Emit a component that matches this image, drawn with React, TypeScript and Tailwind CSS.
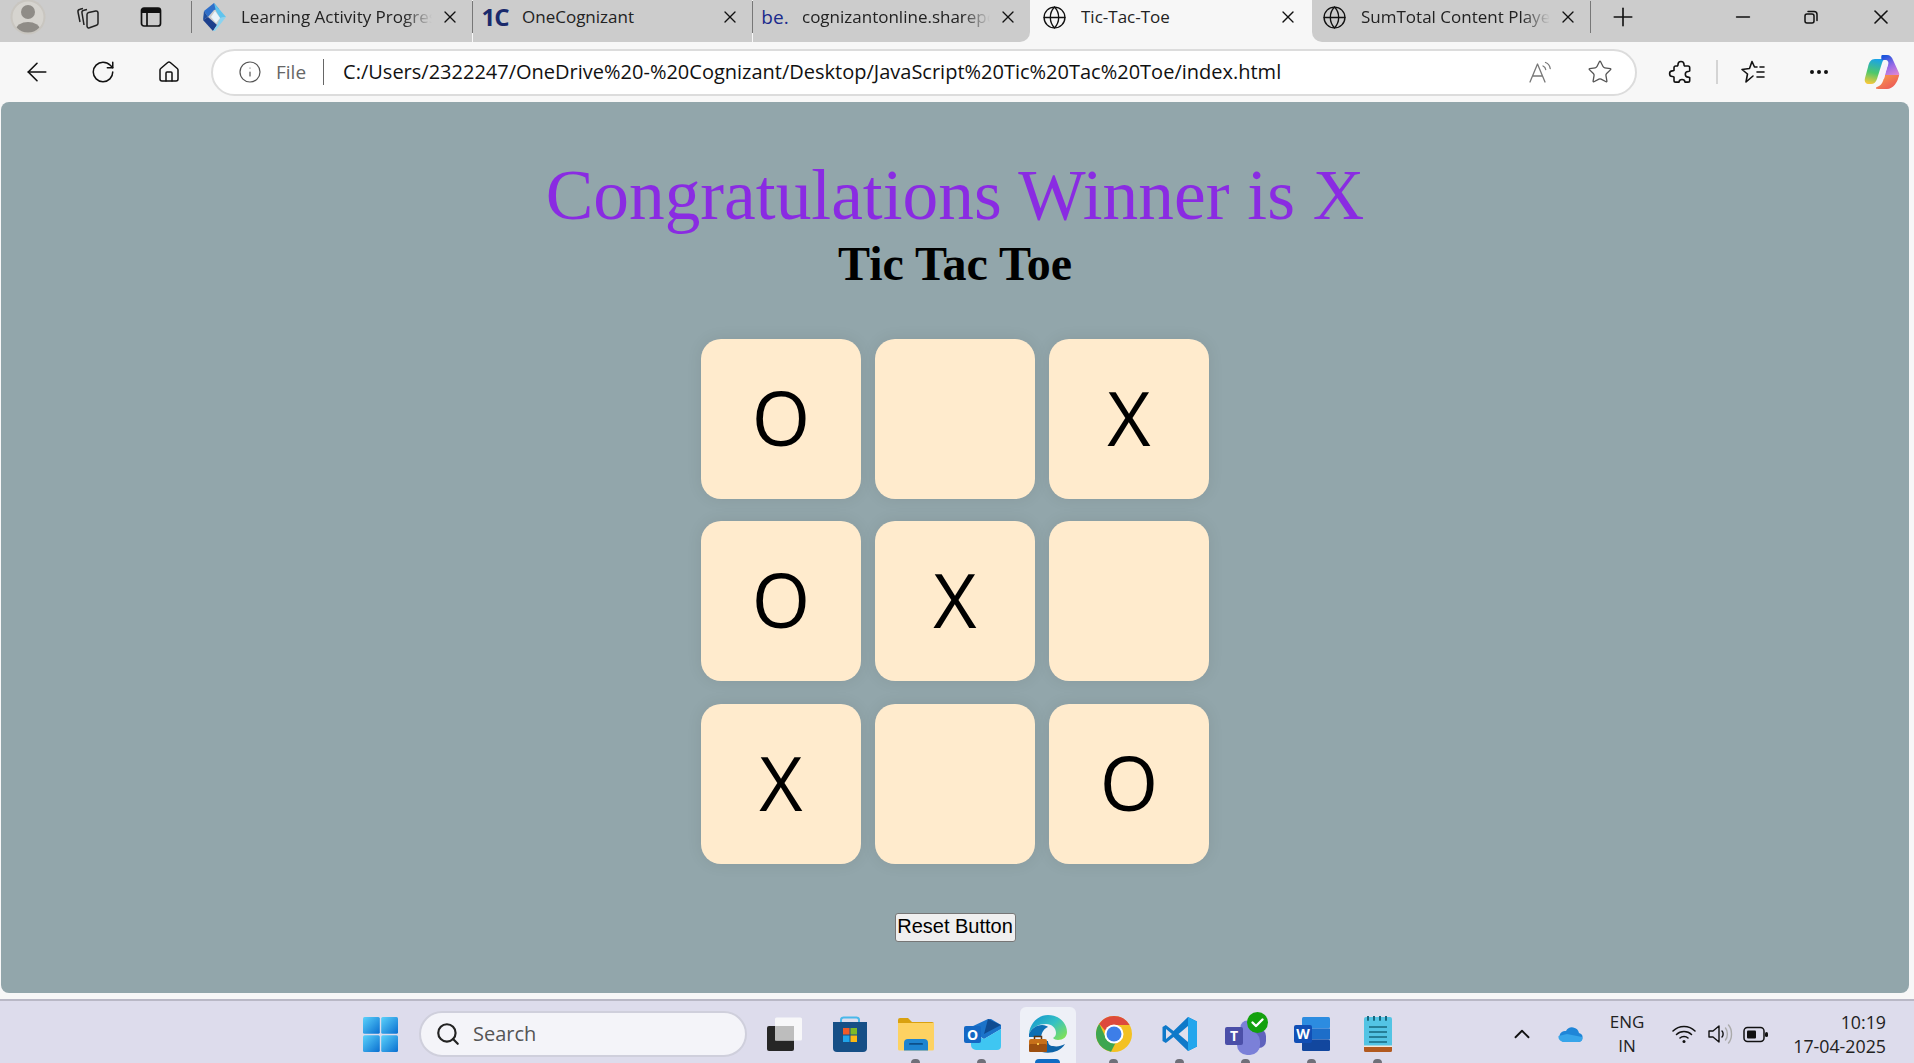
import type { ReactNode } from "react";
import {
  ArrowLeft,
  ChevronUp,
  Ellipsis,
  Globe,
  House,
  Info,
  Minus,
  Plus,
  RotateCw,
  Search,
  Star,
  X,
} from "lucide-react";

const board = ["O", "", "X", "O", "X", "", "X", "", "O"];

function ProfileIcon() {
  return (
    <svg width="36" height="36" viewBox="0 0 36 36">
      <circle cx="18" cy="18" r="17.5" fill="#c9c6c0" />
      <clipPath id="pf">
        <circle cx="18" cy="18" r="15.5" />
      </clipPath>
      <g clipPath="url(#pf)">
        <circle cx="18" cy="18" r="16" fill="#d6d4cf" />
        <circle cx="18" cy="13" r="7" fill="#8f8c87" />
        <ellipse cx="18" cy="31" rx="12" ry="8" fill="#8f8c87" />
      </g>
    </svg>
  );
}

function CollectionsIcon() {
  return (
    <svg width="26" height="26" viewBox="0 0 26 26" fill="none" stroke="#222" strokeWidth="1.5" strokeLinejoin="round">
      <path d="M5 18 3 8c-.3-1.500.5-2.500 2-2.800L8 4.500" />
      <path d="M9 21 7 9c-.3-1.500.5-2.500 2-2.800l3-.7" />
      <path d="M12 10.500c0-1 .7-1.800 1.700-2l7-1.500c1.300-.3 2.300.6 2.300 1.800v10.500c0 1-.6 1.700-1.500 2l-7 2.500c-1.300.4-2.500-.5-2.500-1.800z" />
    </svg>
  );
}

function VerticalTabsIcon() {
  return (
    <svg width="24" height="24" viewBox="0 0 24 24" fill="none">
      <rect x="2.500" y="3" width="19" height="18" rx="2.500" stroke="#111" strokeWidth="1.700" />
      <path d="M2.500 5.500A2.500 2.500 0 0 1 5 3h14a2.500 2.500 0 0 1 2.500 2.500V8h-19z" fill="#111" />
      <path d="M8 8v13" stroke="#111" strokeWidth="1.700" />
    </svg>
  );
}

function LearningIcon() {
  return (
    <svg width="25" height="30" viewBox="0 0 25 30">
      <path d="M12 1 2 9l4 6 6-7 5-1z" fill="#2f6fc9" />
      <path d="M2 9 1 18l5-3z" fill="#1f4f9f" />
      <path d="M1 18l10 11 4-6-9-8z" fill="#1c3f8c" />
      <path d="M12 1l12 14-6 1-4-7z" fill="#5ec4ee" />
      <path d="M24 15 13 29l-2 0 4-6 3-7z" fill="#8ad3f0" />
      <path d="M13 9l5 7-4 5-5-6z" fill="#e8f3fa" />
    </svg>
  );
}

function ReadAloudIcon() {
  return (
    <svg width="26" height="26" viewBox="0 0 26 26" fill="none" stroke="#777" strokeWidth="1.300" strokeLinecap="round" strokeLinejoin="round">
      <path d="M2 23 9.500 5 17 23M5 17h9" />
      <path d="M15 7c1.500.6 2.500 2 2.700 3.500M17.500 3.500c2.600 1 4.300 3.300 4.700 6" />
    </svg>
  );
}

function PuzzleIcon() {
  return (
    <svg width="26" height="26" viewBox="0 0 26 26" fill="none" stroke="#111" strokeWidth="1.600" strokeLinejoin="round">
      <path d="M10 5.500a3 3 0 0 1 6 0c0 .8 0 1 .5 1.500h3.500c1 0 1.700.7 1.700 1.700V12c-.5.4-1 .5-1.600.5a2.800 2.800 0 0 0 0 5.600c.6 0 1.100.1 1.600.5v2.800c0 1-.7 1.700-1.700 1.700H17c-.2-1.700-1.600-2.600-3-2.600s-2.800.9-3 2.600H7.700C6.700 23.100 6 22.400 6 21.400V18c-.5-.4-1-.5-1.600-.5a2.800 2.800 0 0 1 0-5.600c.6 0 1.100-.1 1.600-.5V8.700C6 7.700 6.700 7 7.700 7h1.800c.5-.5.500-.7.500-1.500z" />
    </svg>
  );
}

function FavoritesIcon() {
  return (
    <svg width="26" height="26" viewBox="0 0 26 26" fill="none" stroke="#111" strokeWidth="1.600" strokeLinejoin="round" strokeLinecap="round">
      <path d="M12 2.500 14.500 8H17M20 8h4M17 13h7M17 18h7M13 17l-7 6 1.500-8L2 10.500 9.500 9.500 12 2.500" />
    </svg>
  );
}

function CopilotIcon() {
  return (
    <svg width="36" height="36" viewBox="0 0 36 36">
      <defs>
        <linearGradient id="cpa" x1="0.500" y1="0" x2="0.300" y2="1">
          <stop offset="0" stopColor="#1aa3e8" />
          <stop offset="0.550" stopColor="#4ec86a" />
          <stop offset="1" stopColor="#f6c83a" />
        </linearGradient>
        <linearGradient id="cpb" x1="0.300" y1="0" x2="0.700" y2="1">
          <stop offset="0" stopColor="#1a55dc" />
          <stop offset="0.500" stopColor="#9a6be6" />
          <stop offset="1" stopColor="#e88ad0" />
        </linearGradient>
        <linearGradient id="cpc" x1="0" y1="0" x2="1" y2="1">
          <stop offset="0" stopColor="#f9a04a" />
          <stop offset="1" stopColor="#ea4d5a" />
        </linearGradient>
      </defs>
      <path d="M11 5h11c-2 0-3 1-4 4l-5 16c-1 3-3 5-6 5H5c-3 0-5-2-4-6l3-11c1-5 3-8 7-8z" fill="url(#cpa)" />
      <path d="M18 1h5c3 0 5 2 6 5l6 13c1 3-1 5-4 5h-7c-3 0-4-1-3-4l3-9c1-3 0-5-3-5h-3c-1 0-1-5 0-5z" fill="url(#cpb)" />
      <path d="M21 21h14c-1 7-6 14-12 14h-8c-3 0-4-1-2-2 3-1 5-3 6-6z" fill="url(#cpc)" />
      <path d="M20 10h4l-4 15h-6z" fill="#f6f0fb" />
    </svg>
  );
}

function RestoreIcon() {
  return (
    <svg width="18" height="18" viewBox="0 0 18 18" fill="none" stroke="#111" strokeWidth="1.500">
      <rect x="3" y="6" width="9" height="9" rx="2" />
      <path d="M6 3.500h6c2 0 3 1 3 3v6" strokeLinecap="round" />
    </svg>
  );
}

function WindowsLogo() {
  return (
    <svg width="35" height="35" viewBox="0 0 35 35">
      <defs>
        <linearGradient id="win" x1="0" y1="0" x2="1" y2="1">
          <stop offset="0" stopColor="#5bd2fb" />
          <stop offset="1" stopColor="#0a6fd0" />
        </linearGradient>
      </defs>
      <rect width="16.800" height="16.800" rx="1.500" fill="url(#win)" />
      <rect x="18.200" width="16.800" height="16.800" rx="1.500" fill="url(#win)" />
      <rect y="18.200" width="16.800" height="16.800" rx="1.500" fill="url(#win)" />
      <rect x="18.200" y="18.200" width="16.800" height="16.800" rx="1.500" fill="url(#win)" />
    </svg>
  );
}

function TaskViewIcon() {
  return (
    <svg width="37" height="35" viewBox="0 0 37 35">
      <rect x="1" y="9" width="27" height="25" rx="2" fill="#262626" />
      <rect x="9" y="0.500" width="27" height="23" rx="1.500" fill="#f7f7f9" />
      <rect x="9" y="9" width="19" height="14.500" fill="#bdbdbd" />
    </svg>
  );
}

function StoreIcon() {
  return (
    <svg width="36" height="37" viewBox="0 0 36 37">
      <path d="M9 7V4c0-1.500 1-2.500 2.500-2.500h13C26 1.500 27 2.500 27 4v3" fill="none" stroke="#49b8ea" strokeWidth="2" />
      <path d="M1 6h34v26a4 4 0 0 1-4 4H5a4 4 0 0 1-4-4z" fill="#164f86" />
      <rect x="11" y="12" width="6.500" height="6.500" fill="#ef5a29" />
      <rect x="18.500" y="12" width="6.500" height="6.500" fill="#7db928" />
      <rect x="11" y="19.500" width="6.500" height="6.500" fill="#1fa4ea" />
      <rect x="18.500" y="19.500" width="6.500" height="6.500" fill="#fcb913" />
    </svg>
  );
}

function FolderIcon() {
  return (
    <svg width="36" height="34" viewBox="0 0 36 34">
      <path d="M0 3a2 2 0 0 1 2-2h8l4 4h20a2 2 0 0 1 2 2v5H0z" fill="#d9a10f" />
      <path d="M0 6h36v26a1.500 1.500 0 0 1-1.500 1.500h-33A1.500 1.500 0 0 1 0 32z" fill="#fdd262" />
      <path d="M6 33.500V26a4 4 0 0 1 4-4h16a4 4 0 0 1 4 4v7.500z" fill="#1e84d0" />
      <rect x="11" y="26" width="14" height="1.800" rx="0.900" fill="#0c4f8a" />
    </svg>
  );
}

function OutlookIcon() {
  return (
    <svg width="37" height="31" viewBox="0 0 37 31">
      <path d="M7 8 24 0h3l10 6v4L20 20 7 12z" fill="#1b73c9" />
      <path d="M24 0l13 6-17 9z" fill="#0f4c92" />
      <path d="M7 14l13 6 17-10v17a4 4 0 0 1-4 4H12a5 5 0 0 1-5-5z" fill="#3fc6f2" />
      <rect x="0" y="7" width="17" height="17" rx="2" fill="#1468c4" />
      <text x="8.500" y="21" textAnchor="middle" fontFamily="Open Sans, sans-serif" fontSize="14" fontWeight="700" fill="#fff">
        O
      </text>
    </svg>
  );
}

function EdgeWorkIcon() {
  return (
    <svg width="38" height="38" viewBox="0 0 38 38">
      <defs>
        <linearGradient id="edgeA" x1="0" y1="0" x2="1" y2="0.800">
          <stop offset="0" stopColor="#0f8fd0" />
          <stop offset="0.550" stopColor="#35c1c4" />
          <stop offset="1" stopColor="#7fe05a" />
        </linearGradient>
      </defs>
      <path d="M0 19C1 8 9 0 19 0c11 0 19 8 19 17 0 5-4 8-9 8-2 0-4-.8-5-2 2-1 3-3 3-5 0-5-4-9-10-9C10 9 3 12 0 19z" fill="url(#edgeA)" />
      <path d="M13 37c8 2 18 0 23-8-4 2-8 3-12 2-3 0-5-2-5-5H12v9z" fill="#0d63a8" />
      <path d="M0 19c2-5 7-9 13-9 3 0 5 1 6 2-3 1-6 4-7 10H0z" fill="#0e6fb4" />
      <rect x="0" y="24" width="18" height="13" rx="2" fill="#c7701a" />
      <rect x="0" y="29" width="18" height="8" rx="1.500" fill="#9c4f10" />
      <path d="M5.500 24v-2.500h7V24" fill="none" stroke="#5a3310" strokeWidth="1.500" />
      <rect x="8" y="28" width="2" height="2" fill="#f6c64a" />
    </svg>
  );
}

function ChromeIcon() {
  return (
    <svg width="36" height="36" viewBox="0 0 36 36">
      <circle cx="18" cy="18" r="18" fill="#f3c122" />
      <path d="M18 0a18 18 0 0 1 15.600 9H18a9 9 0 0 0-8.500 6L3.200 7.700A18 18 0 0 1 18 0z" fill="#dd4a3c" />
      <path d="M3.200 7.700 10.200 22.500A9 9 0 0 0 19.500 27L15 35.700A18 18 0 0 1 3.200 7.700z" fill="#3ea650" />
      <circle cx="18" cy="18" r="9.500" fill="#fff" />
      <circle cx="18" cy="18" r="7.500" fill="#3d7ee8" />
    </svg>
  );
}

function VsCodeIcon() {
  return (
    <svg width="36" height="36" viewBox="0 0 36 36">
      <path d="M26 1 35 5.500v25L26 35 11.500 21 3.800 27 .5 25V11l3.300-2 7.700 6z" fill="#0f79c9" />
      <path d="M26 1 35 5.500v25L26 35z" fill="#23a6ed" />
      <path d="M4 13 10 18 4 23z" fill="#e0dfec" />
      <path d="M26 10 16.500 18 26 26z" fill="#e0dfec" />
    </svg>
  );
}

function TeamsIcon() {
  return (
    <svg width="45" height="44" viewBox="0 0 45 44">
      <circle cx="35" cy="21" r="4" fill="#5f62bd" />
      <rect x="26" y="17" width="16" height="19" rx="7" fill="#5f62bd" />
      <circle cx="23" cy="15" r="6.500" fill="#7b80d8" />
      <rect x="13" y="19" width="23" height="24" rx="10" fill="#7b80d8" />
      <rect x="1" y="15" width="18" height="18" rx="2" fill="#4b4fa8" />
      <text x="10" y="29" textAnchor="middle" fontFamily="Open Sans, sans-serif" fontSize="14" fontWeight="700" fill="#fff">
        T
      </text>
      <circle cx="33.500" cy="10.500" r="10.500" fill="#13a10e" />
      <path d="M28.500 10.500l3.500 3.500 6.500-6.500" fill="none" stroke="#fff" strokeWidth="2.400" strokeLinecap="round" strokeLinejoin="round" />
    </svg>
  );
}

function WordIcon() {
  return (
    <svg width="36" height="34" viewBox="0 0 36 34">
      <rect x="8" y="0" width="28" height="11.500" rx="1.500" fill="#2c8ce0" />
      <rect x="8" y="11.500" width="28" height="11" fill="#1d6ec9" />
      <rect x="8" y="22.500" width="28" height="11.500" rx="1.500" fill="#12479e" />
      <rect x="0" y="8" width="18" height="18" rx="2" fill="#114fb5" />
      <text x="9" y="22" textAnchor="middle" fontFamily="Open Sans, sans-serif" fontSize="14" fontWeight="700" fill="#fff">
        W
      </text>
    </svg>
  );
}

function NotepadIcon() {
  return (
    <svg width="29" height="36" viewBox="0 0 29 36">
      <rect x="0" y="1" width="28" height="33" rx="2" fill="#53c4e4" />
      <path d="M0 31h28v3.500a1.500 1.500 0 0 1-1.500 1.500h-25A1.500 1.500 0 0 1 0 34.500z" fill="#b25a1f" />
      <path d="M0 29.500h28V31H0z" fill="#f3e8db" />
      <path d="M5 11h18M5 16h18M5 21h18M5 26h18" stroke="#17687f" strokeWidth="1.600" />
      <path d="M4 0v4M10 0v4M16 0v4M22 0v4" stroke="#17687f" strokeWidth="2" strokeLinecap="round" />
    </svg>
  );
}

function OneDriveIcon() {
  return (
    <svg width="25" height="18" viewBox="0 0 25 18">
      <path d="M6 17h14a4.500 4.500 0 0 0 1-8.900A7 7 0 0 0 8 6a5.500 5.500 0 0 0-2 11z" fill="#1f86d8" />
      <path d="M5 17c-3-1-5-3-4.500-6L9 9l15 3c1 2 0 5-4 5z" fill="#37a5ea" />
    </svg>
  );
}

function WifiIcon() {
  return (
    <svg width="24" height="20" viewBox="0 0 24 20" fill="none" stroke="#111" strokeWidth="1.500" strokeLinecap="round">
      <path d="M1 7c6-6 16-6 22 0M4.500 10.500c4-4 11-4 15 0M8 14c2-2 6-2 8 0" />
      <circle cx="12" cy="17.500" r="1.500" fill="#111" stroke="none" />
    </svg>
  );
}

function VolumeIcon() {
  return (
    <svg width="25" height="22" viewBox="0 0 25 22" fill="none" strokeWidth="1.400" strokeLinejoin="round" strokeLinecap="round">
      <path d="M1 8h4l6-5v16l-6-5H1z" stroke="#111" />
      <path d="M14 8c1.500 1.500 1.500 4.500 0 6" stroke="#111" />
      <path d="M17.500 5c2.500 3 2.500 9 0 12M20.500 2c4 4.500 4 13.500 0 18" stroke="#aaa" />
    </svg>
  );
}

function BatteryIcon() {
  return (
    <svg width="25" height="17" viewBox="0 0 25 17" fill="none">
      <rect x="1" y="1.500" width="20" height="14" rx="3.500" stroke="#111" strokeWidth="1.500" />
      <rect x="4" y="4.500" width="9" height="8" rx="1" fill="#111" />
      <rect x="22" y="6" width="3" height="5" rx="1.500" fill="#111" />
    </svg>
  );
}

function BrowserTab({
  width,
  icon,
  title,
  active,
  fade,
  roundBR,
  roundBL,
}: {
  width: string;
  icon: ReactNode;
  title: string;
  active?: boolean;
  fade?: boolean;
  roundBR?: boolean;
  roundBL?: boolean;
}) {
  return (
    <div
      className={`${width} flex h-full items-center pb-[8px] ${active ? "bg-[#f7f7f7] pl-[11px] pr-[16px]" : "bg-[#cccccc] pl-[9px] pr-[14px]"} ${
        roundBR ? "rounded-br-[10px]" : ""
      } ${roundBL ? "rounded-bl-[10px]" : ""}`}
    >
      <div className="flex w-[26px] justify-center">{icon}</div>
      <span
        className={`ml-[14px] mr-[10px] flex-1 overflow-hidden whitespace-nowrap text-[17px] text-[#222] ${
          fade ? "[mask-image:linear-gradient(to_right,black_85%,transparent)]" : ""
        }`}
      >
        {title}
      </span>
      <X size={20} strokeWidth={1.600} className="mx-[-2px] text-[#111]" />
    </div>
  );
}

function TaskbarSlot({ children, dot, active }: { children: ReactNode; dot?: boolean; active?: boolean }) {
  return (
    <div className="relative flex h-[58px] w-[66px] items-center justify-center">
      {active && <div className="absolute bottom-0 left-[5px] top-[2px] w-[56px] rounded-t-md bg-[#eef0f7]" />}
      <div className="relative">{children}</div>
      {dot && <div className="absolute bottom-0 left-[28px] h-[4px] w-[9px] rounded-t-full bg-[#6f6f78]" />}
      {active && <div className="absolute bottom-0 left-[20px] h-[4px] w-[25px] rounded-t-sm bg-[#0f6cc4]" />}
    </div>
  );
}

export default function App() {
  return (
    <div className="flex h-[1063px] w-[1914px] flex-col overflow-hidden bg-[#f7f7f7] font-['Open_Sans',sans-serif]">
      {/* tab strip */}
      <div className="flex h-[42px] shrink-0 items-center bg-[#cccccc] pb-[8px]">
        <div className="flex w-[56px] justify-center">
          <ProfileIcon />
        </div>
        <div className="flex w-[64px] justify-center">
          <CollectionsIcon />
        </div>
        <div className="flex w-[62px] justify-center">
          <VerticalTabsIcon />
        </div>
        <div className="ml-[9px] h-[32px] w-px bg-[#777]" />
        <div className="mb-[-8px] flex h-[42px] bg-[#f7f7f7]">
          <BrowserTab width="w-[280px]" icon={<LearningIcon />} title="Learning Activity Progress" fade />
          <div className="mb-[8px] h-[32px] w-px self-center bg-[#777]" />
          <BrowserTab
            width="w-[279px]"
            icon={<span className="text-[24px] font-bold tracking-[-1px] text-[#1a2a6c]">1C</span>}
            title="OneCognizant"
          />
          <div className="mb-[8px] h-[32px] w-px self-center bg-[#777]" />
          <BrowserTab
            width="w-[277px]"
            icon={<span className="text-[19px] text-[#1a2a8c]">be.</span>}
            title="cognizantonline.sharepoint.com"
            fade
            roundBR
          />
          <BrowserTab width="w-[282px]" icon={<Globe size={25} strokeWidth={1.300} className="text-[#111]" />} title="Tic-Tac-Toe" active />
          <BrowserTab
            width="w-[278px]"
            icon={<Globe size={25} strokeWidth={1.300} className="text-[#111]" />}
            title="SumTotal Content Player"
            fade
            roundBL
          />
        </div>
        <div className="h-[32px] w-px bg-[#777]" />
        <Plus size={30} strokeWidth={1.300} className="ml-[17px] text-[#111]" />
        <Minus size={22} strokeWidth={1.700} className="ml-[94px] text-[#111]" />
        <div className="ml-[48px]">
          <RestoreIcon />
        </div>
        <X size={24} strokeWidth={1.600} className="ml-[49px] text-[#111]" />
      </div>

      {/* toolbar */}
      <div className="flex h-[60px] shrink-0 items-center">
        <ArrowLeft size={30} strokeWidth={1.300} className="ml-[22px] text-[#111]" />
        <RotateCw size={26} strokeWidth={1.400} className="ml-[38px] text-[#111]" />
        <House size={24} strokeWidth={1.500} className="ml-[41px] text-[#111]" />
        <div className="ml-[30px] flex h-[47px] w-[1426px] items-center rounded-full border-2 border-[#dcdcdc] bg-white pl-[25px]">
          <Info size={24} strokeWidth={1.200} className="text-[#555]" />
          <span className="ml-[14px] text-[19px] text-[#666]">File</span>
          <div className="ml-[17px] h-[26px] w-px bg-[#666]" />
          <span className="ml-[19px] whitespace-nowrap text-[20px] text-[#111]">
            C:/Users/2322247/OneDrive%20-%20Cognizant/Desktop/JavaScript%20Tic%20Tac%20Toe/index.html
          </span>
          <div className="ml-auto flex items-center">
            <ReadAloudIcon />
            <Star size={26} strokeWidth={1.200} className="ml-[33px] mr-[22px] text-[#555]" />
          </div>
        </div>
        <div className="ml-[31px]">
          <PuzzleIcon />
        </div>
        <div className="ml-[22px] h-[24px] w-[2px] bg-[#d4d4d4]" />
        <div className="ml-[22px]">
          <FavoritesIcon />
        </div>
        <Ellipsis size={24} strokeWidth={2} className="ml-[41px] text-[#111]" />
        <div className="ml-[33px]">
          <CopilotIcon />
        </div>
      </div>

      {/* page */}
      <main className="ml-px flex h-[891px] w-[1908px] shrink-0 flex-col items-center rounded-lg bg-[#92a6ab] pt-[52px]">
        <h1 className="font-['Liberation_Serif',serif] text-[71.400px] leading-[82px] text-[#8a2be2]">Congratulations Winner is X</h1>
        <h2 className="mt-[1px] font-['Liberation_Serif',serif] text-[48px] font-bold leading-[54px] text-black">Tic Tac Toe</h2>
        <div className="mt-[48px] grid grid-cols-[repeat(3,160px)] gap-x-[14px] gap-y-[22.400px]">
          {board.map((mark, i) => (
            <button
              key={i}
              className="flex h-[160px] items-center justify-center rounded-[20px] bg-[#ffebcd] pb-[4px] text-[75px] text-black shadow-[0_0_16px_rgba(0,0,0,0.08)]"
            >
              {mark}
            </button>
          ))}
        </div>
        <button className="mt-[49px] h-[29px] w-[121px] rounded-[3px] border border-[#767676] bg-[#efefef] pb-[2px] font-['Liberation_Sans',sans-serif] text-[20px] leading-none text-black">
          Reset Button
        </button>
      </main>

      <div className="h-[6px] shrink-0" />

      {/* taskbar */}
      <div className="flex h-[64px] shrink-0 items-center border-t-2 border-[#b9b8c6] bg-[#dddcec] pt-[4px]">
        <div className="ml-[363px]">
          <WindowsLogo />
        </div>
        <div className="ml-[21px] flex h-[46px] w-[328px] items-center rounded-full border-2 border-[#cfcfdc] bg-[#f4f4f9] pl-[14px]">
          <Search size={26} strokeWidth={2} className="text-[#222]" />
          <span className="ml-[12px] text-[20px] text-[#555]">Search</span>
        </div>
        <div className="ml-[4px] flex">
          <TaskbarSlot>
            <TaskViewIcon />
          </TaskbarSlot>
          <TaskbarSlot>
            <StoreIcon />
          </TaskbarSlot>
          <TaskbarSlot dot>
            <FolderIcon />
          </TaskbarSlot>
          <TaskbarSlot dot>
            <OutlookIcon />
          </TaskbarSlot>
          <TaskbarSlot active>
            <EdgeWorkIcon />
          </TaskbarSlot>
          <TaskbarSlot dot>
            <ChromeIcon />
          </TaskbarSlot>
          <TaskbarSlot dot>
            <VsCodeIcon />
          </TaskbarSlot>
          <TaskbarSlot dot>
            <TeamsIcon />
          </TaskbarSlot>
          <TaskbarSlot dot>
            <WordIcon />
          </TaskbarSlot>
          <TaskbarSlot dot>
            <NotepadIcon />
          </TaskbarSlot>
        </div>
        <ChevronUp size={26} strokeWidth={1.700} className="ml-[98px] text-[#111]" />
        <div className="ml-[23px]">
          <OneDriveIcon />
        </div>
        <div className="ml-[24px] flex w-[40px] flex-col items-center text-[17px] leading-[24px] text-[#222]">
          <span>ENG</span>
          <span>IN</span>
        </div>
        <div className="ml-[25px]">
          <WifiIcon />
        </div>
        <div className="ml-[12px]">
          <VolumeIcon />
        </div>
        <div className="ml-[10px]">
          <BatteryIcon />
        </div>
        <div className="ml-auto mr-[28px] flex flex-col items-end text-[17.800px] leading-[24px] text-[#222]">
          <span>10:19</span>
          <span>17-04-2025</span>
        </div>
      </div>
    </div>
  );
}
